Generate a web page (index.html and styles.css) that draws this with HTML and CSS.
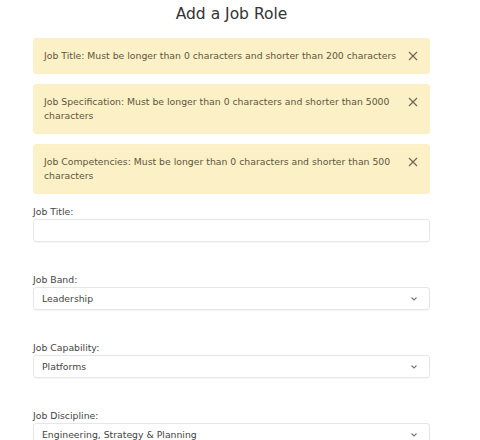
FILE: index.html
```html
<!DOCTYPE html>
<html>
<head>
<meta charset="utf-8">
<link rel="stylesheet" href="styles.css">
</head>
<body>
<div class="page">
  <h1 class="title">Add a Job Role</h1>
  <div class="alert">
    <span class="alert-text">Job Title: Must be longer than 0 characters and shorter than 200 characters</span>
    <span class="close"><svg width="10" height="10" viewBox="0 0 10 10"><path d="M1 1L9 9M9 1L1 9" stroke="#6b6350" stroke-width="1.1" fill="none"/></svg></span>
  </div>
  <div class="alert">
    <span class="alert-text">Job Specification: Must be longer than 0 characters and shorter than 5000 characters</span>
    <span class="close"><svg width="10" height="10" viewBox="0 0 10 10"><path d="M1 1L9 9M9 1L1 9" stroke="#6b6350" stroke-width="1.1" fill="none"/></svg></span>
  </div>
  <div class="alert">
    <span class="alert-text">Job Competencies: Must be longer than 0 characters and shorter than 500 characters</span>
    <span class="close"><svg width="10" height="10" viewBox="0 0 10 10"><path d="M1 1L9 9M9 1L1 9" stroke="#6b6350" stroke-width="1.1" fill="none"/></svg></span>
  </div>
  <div class="field">
    <label class="label">Job Title:</label>
    <div class="input"></div>
  </div>
  <div class="field">
    <label class="label">Job Band:</label>
    <div class="input select"><span>Leadership</span><svg class="chev" width="8" height="6" viewBox="0 0 8 6"><path d="M1.5 1.5L4 4L6.5 1.5" stroke="#777" stroke-width="1.1" fill="none"/></svg></div>
  </div>
  <div class="field">
    <label class="label">Job Capability:</label>
    <div class="input select"><span>Platforms</span><svg class="chev" width="8" height="6" viewBox="0 0 8 6"><path d="M1.5 1.5L4 4L6.5 1.5" stroke="#777" stroke-width="1.1" fill="none"/></svg></div>
  </div>
  <div class="field">
    <label class="label">Job Discipline:</label>
    <div class="input select"><span>Engineering, Strategy &amp; Planning</span><svg class="chev" width="8" height="6" viewBox="0 0 8 6"><path d="M1.5 1.5L4 4L6.5 1.5" stroke="#777" stroke-width="1.1" fill="none"/></svg></div>
  </div>
</div>
</body>
</html>
```
FILE: styles.css
```css
html, body {
  margin: 0;
  padding: 0;
  background: #ffffff;
  overflow: hidden;
}
body {
  font-family: "DejaVu Sans", sans-serif;
  color: #3d3d3d;
}
.page {
  width: 397px;
  margin-left: 33px;
  display: flex;
  flex-direction: column;
}
.title {
  margin: 4px 0 0 0;
  height: 34px;
  font-size: 15.5px;
  font-weight: normal;
  line-height: 20px;
  text-align: center;
  color: #333;
}
.alert {
  margin-top: 10px;
  background: #fcf0c6;
  border: 1px solid #fbefc9;
  border-radius: 3px;
  padding: 10px 8px 10px 10px;
  display: flex;
  align-items: flex-start;
  gap: 6px;
  font-size: 9.3px;
  line-height: 14px;
  color: #5e5640;
}
.alert:first-of-type { margin-top: 0; }
.alert-text { flex: 1; }
.close {
  width: 16px;
  display: flex;
  justify-content: center;
  padding-top: 2px;
}
.field {
  display: flex;
  flex-direction: column;
  margin-top: 12px;
}
.field + .field { margin-top: 32px; }
.label {
  font-size: 9.3px;
  line-height: 12px;
  color: #444;
  margin-bottom: 1px;
}
.input {
  height: 21px;
  border: 1px solid #e6e6e6;
  border-radius: 3px;
  box-shadow: 0 1px 1px rgba(0,0,0,0.04);
  display: flex;
  align-items: center;
  padding: 0 11px 0 8px;
  font-size: 9.3px;
  color: #444;
}
.select { justify-content: space-between; }
```
